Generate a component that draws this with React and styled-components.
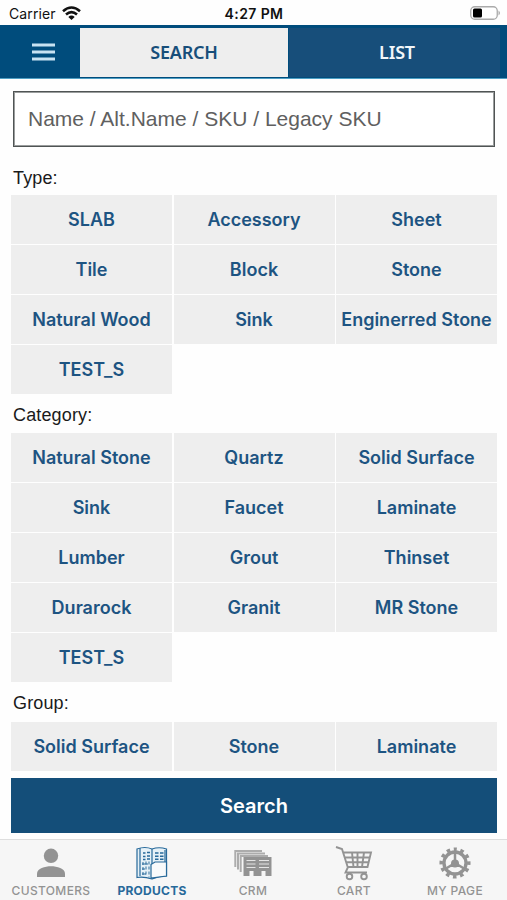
import React from "react";
import styled, { createGlobalStyle } from "styled-components";

const Global = createGlobalStyle`
  *, *::before, *::after { box-sizing: border-box; }
  body { margin: 0; background: #fff; }
  button, input { margin: 0; padding: 0; border: 0; border-radius: 0; outline: 0; }
`;

const Screen = styled.div`
  width: 507px;
  height: 900px;
  display: flex;
  flex-direction: column;
  overflow: hidden;
  background: #fefefe;
  font-family: Inter, sans-serif;
`;

const StatusBar = styled.header`
  height: 25px;
  flex: none;
  display: grid;
  grid-template-columns: 1fr auto 1fr;
  align-items: center;
  padding: 3px 6px 0 9px;
  color: #111;
`;
const Carrier = styled.div`
  display: flex;
  align-items: center;
  gap: 6px;
  font-size: 14px;
  line-height: 20px;
  letter-spacing: 0.1px;
  svg { margin-top: -2px; }
`;
const Clock = styled.time`
  margin-right: 2px;
  font-size: 14px;
  font-weight: 600;
  line-height: 20px;
  letter-spacing: 0.4px;
`;
const Battery = styled.svg`
  justify-self: end;
  margin-top: -2px;
`;

const TopBar = styled.nav`
  height: 54px;
  flex: none;
  display: flex;
  padding: 3px 7px 1px 0;
  background: #004c7c;
  border-bottom: 1px solid #4e9fc4;
`;
const MenuButton = styled.button`
  width: 80px;
  display: flex;
  align-items: center;
  padding-left: 32px;
  background: transparent;
  svg { margin-top: -2px; }
`;
const TopTab = styled.button`
  width: ${(p) => (p.$active ? 208 : 211)}px;
  margin-right: ${(p) => (p.$active ? 1 : 0)}px;
  padding-left: ${(p) => (p.$active ? 0 : 5)}px;
  background: ${(p) => (p.$active ? "#eee" : "#174e7a")};
  color: ${(p) => (p.$active ? "#174e7a" : "#f2f7fa")};
  font: 600 18px/49px "Noto Sans", sans-serif;
  letter-spacing: -0.2px;
`;

const Content = styled.main`
  flex: 1;
  display: flex;
  flex-direction: column;
  padding: 12px 10px 0 11px;
`;
const SearchField = styled.input`
  width: 482px;
  height: 56px;
  flex: none;
  margin-left: 2px;
  padding: 0 14px;
  border: 1.5px solid #505454;
  outline: 0.5px solid #9a9d9d;
  outline-offset: -2px;
  background: #fff;
  font: 21px "Liberation Sans", sans-serif;
  &::placeholder { color: #606060; opacity: 1; }
`;
const SectionLabel = styled.h2`
  height: ${(p) => p.$height}px;
  margin: 0;
  padding: ${(p) => p.$top}px 0 0 2px;
  color: #1a1a1a;
  font: 400 18px/20px "Liberation Sans", sans-serif;
  letter-spacing: 0.15px;
`;
const OptionGrid = styled.div`
  display: grid;
  grid-template-columns: repeat(3, 1fr);
  grid-auto-rows: 49px;
  gap: 1px 1.5px;
`;
const Option = styled.button`
  background: #eee;
  color: #1d5482;
  font: 600 18px/49px Inter, sans-serif;
  white-space: nowrap;
`;
const SearchButton = styled.button`
  height: 55px;
  margin-top: 7px;
  background: #144e79;
  color: #fff;
  font: 600 20px/54px Inter, sans-serif;
`;

const TabBar = styled.footer`
  height: 61px;
  flex: none;
  display: grid;
  grid-template-columns: repeat(5, 101px);
  background: #f6f6f6;
  border-top: 1px solid #dedede;
`;
const TabItem = styled.button`
  display: flex;
  flex-direction: column;
  align-items: center;
  padding-top: 5px;
  padding-left: 1px;
  background: transparent;
  color: ${(p) => (p.$active ? "#27699a" : "#939393")};
  font: ${(p) => (p.$active ? 700 : 500)} 12px/15px Inter, sans-serif;
  letter-spacing: ${(p) => (p.$active ? 0.25 : 0.35)}px;
  svg { flex: none; margin-bottom: 2px; }
`;

const sections = [
  { label: "Type:", height: 48, top: 21, options: ["SLAB", "Accessory", "Sheet", "Tile", "Block", "Stone", "Natural Wood", "Sink", "Enginerred Stone", "TEST_S"] },
  { label: "Category:", height: 39, top: 11, options: ["Natural Stone", "Quartz", "Solid Surface", "Sink", "Faucet", "Laminate", "Lumber", "Grout", "Thinset", "Durarock", "Granit", "MR Stone", "TEST_S"] },
  { label: "Group:", height: 40, top: 11, options: ["Solid Surface", "Stone", "Laminate"] },
];

const WifiIcon = () => (
  <svg width="19" height="15" viewBox="0 0 19 15" fill="none" stroke="#111" strokeWidth="2.6">
    <path d="M1 5.2Q9.500-2.200 18 5.200M4 8.500Q9.500 3.700 15 8.500" />
    <path d="M6.300 10.900Q9.500 8.300 12.700 10.900L9.500 14Z" fill="#111" stroke="none" />
  </svg>
);

const UserIcon = () => (
  <svg width="36" height="36" viewBox="0 0 36 36" fill="currentColor">
    <circle cx="18" cy="10.800" r="7.200" />
    <path d="M4 32v-3.500c0-5.200 8-7.300 14-7.300s14 2.100 14 7.300V32Z" />
  </svg>
);

const CatalogIcon = () => (
  <svg width="36" height="36" viewBox="0 0 36 36" fill="none" stroke="currentColor" strokeWidth="1.200">
    <path d="M3 4Q11 1 18 4Q25 1.500 32.500 4V31Q25 31 18 34Q10 31.500 3 32.500Z" fill="#e6f1f7" />
    <path d="M6 3V31M18 4V34M31 5V18" />
    <path d="M9 8h2.500M13 7.500h3M9 11.500h2.500M13 11h3M9 14.500h2.500M13 14h3M21 8h3.500M26 8h3.500M21 11.200h3.500M26 11.200h3.500M21 14.200h3.500M26 14.200h3.500" strokeWidth="1.600" />
    <path d="M17 19.500L21 17H32.500V31L17 33Z" fill="#f8fafb" />
    <path d="M9 17v15M12 16.500v15M15 16.500v16" strokeDasharray="3 2" opacity=".8" />
    <path d="M8 19h6M8 24h3M8 29h4" />
  </svg>
);

const CrmIcon = () => (
  <svg width="38" height="36" viewBox="0 0 38 36" fill="none" stroke="currentColor">
    <path d="M1.300 22V6H28M4 24.500V8.500H31M6.700 27V11H34" strokeWidth="2" opacity=".75" />
    <path d="M9.500 12h28v19h-6v-5h-4v5h-8v-5h-4v5h-6Z" fill="currentColor" stroke="none" />
    <path d="M12.500 15.500h9M25 15.500h10M12.500 19h9M25 19h10M12.500 22.500h9M25 22.500h10" stroke="#e4e4e4" strokeWidth="1.200" />
  </svg>
);

const CartIcon = () => (
  <svg width="38" height="36" viewBox="0 0 38 36" fill="none" stroke="currentColor" strokeWidth="1.900">
    <path d="M1 2L7 4L13 23M8 7.500H36L32.500 22H12.500M10 12.500H35M11 17.200H34M17 7.500L18.500 22M22.500 7.500V22M29 7.500L27 22M13 22L10.500 27.500H32" />
    <circle cx="14.500" cy="31.500" r="2.800" /><circle cx="29" cy="31.500" r="2.800" />
  </svg>
);

const GearIcon = () => (
  <svg width="36" height="36" viewBox="0 0 36 36" fill="none" stroke="currentColor">
    <circle cx="18" cy="18" r="11" strokeWidth="3.300" />
    <circle cx="18" cy="18" r="13.800" strokeWidth="3.500" strokeDasharray="3.600 3.625" strokeDashoffset="1.800" transform="rotate(-90 18 18)" />
    <path d="M18 13.500L23 22H13Z" fill="currentColor" stroke="none" />
    <circle cx="18" cy="18.500" r="4" fill="currentColor" stroke="none" />
    <path d="M18 7V18L9 23.500M18 18L27 23.500" strokeWidth="2.500" />
  </svg>
);

const tabs = [
  { label: "CUSTOMERS", Icon: UserIcon },
  { label: "PRODUCTS", Icon: CatalogIcon, active: true },
  { label: "CRM", Icon: CrmIcon },
  { label: "CART", Icon: CartIcon },
  { label: "MY PAGE", Icon: GearIcon },
];

export default function App() {
  return (
    <Screen>
      <Global />
      <StatusBar>
        <Carrier>Carrier <WifiIcon /></Carrier>
        <Clock>4:27 PM</Clock>
        <Battery width="31" height="14" viewBox="0 0 31 14">
          <rect x=".75" y=".75" width="26.500" height="12.500" rx="4" fill="#fff" stroke="#aaa" strokeWidth="1.300" />
          <rect x="3" y="2.500" width="9" height="9" rx="1.500" fill="#000" />
          <path d="M28.500 4.500q3 2.500 0 5Z" fill="#aaa" />
        </Battery>
      </StatusBar>
      <TopBar>
        <MenuButton aria-label="Menu">
          <svg width="24" height="20" viewBox="0 0 24 20" stroke="#c7e2f2" strokeWidth="2.800">
            <path d="M0 3h23M0 10h23M0 17h23" />
          </svg>
        </MenuButton>
        <TopTab $active>SEARCH</TopTab>
        <TopTab>LIST</TopTab>
      </TopBar>
      <Content>
        <SearchField placeholder="Name / Alt.Name / SKU / Legacy SKU" />
        {sections.map(({ label, height, top, options }) => (
          <React.Fragment key={label}>
            <SectionLabel $height={height} $top={top}>{label}</SectionLabel>
            <OptionGrid>
              {options.map((name) => <Option key={name}>{name}</Option>)}
            </OptionGrid>
          </React.Fragment>
        ))}
        <SearchButton>Search</SearchButton>
      </Content>
      <TabBar>
        {tabs.map(({ label, Icon, active }) => (
          <TabItem key={label} $active={active}><Icon />{label}</TabItem>
        ))}
      </TabBar>
    </Screen>
  );
}
